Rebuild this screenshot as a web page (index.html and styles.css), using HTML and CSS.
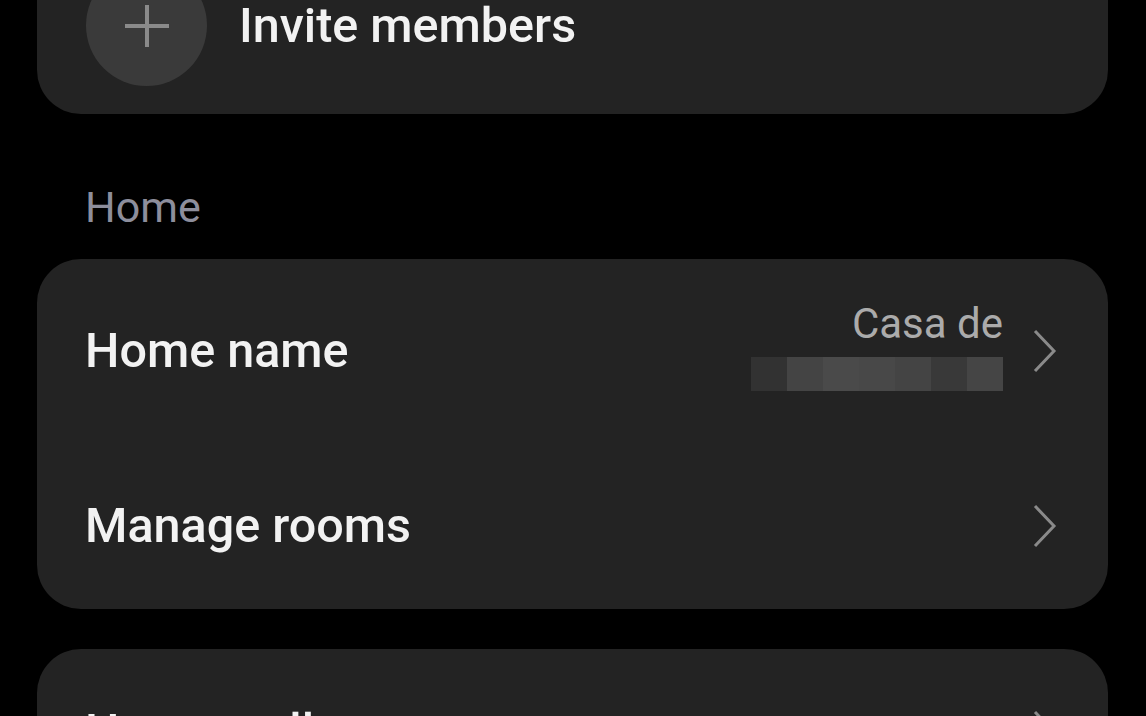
FILE: index.html
```html
<!DOCTYPE html>
<html lang="en">
<head>
    <meta charset="UTF-8">
    <meta name="viewport" content="width=device-width, initial-scale=1.0">
    <title>Home settings</title>
    <link rel="stylesheet" href="styles.css">
</head>
<body>
    <div class="container">
        <div class="card">
            <div class="invite">
                <div class="invite-icon">
                    <svg width="44" height="42" viewBox="0 0 44 42">
                        <path d="M0 21H44M22 0V42" stroke="#8a8a8a" stroke-width="4" fill="none"/>
                    </svg>
                </div>
                <span class="invite-text">Invite members</span>
            </div>
        </div>

        <div class="section-label">Home</div>

        <div class="card">
            <div class="row">
                <span class="title">Home name</span>
                <div class="value">
                    <span class="value-text">Casa de</span>
                    <div class="blurred">
                        <span></span><span></span><span></span><span></span><span></span><span></span><span></span>
                    </div>
                </div>
                <svg class="chevron" width="24" height="44" viewBox="0 0 24 44">
                    <polyline points="2,2 21,22 2,42" stroke="#8a8a8a" stroke-width="3" fill="none"/>
                </svg>
            </div>
            <div class="row">
                <span class="title">Manage rooms</span>
                <svg class="chevron" width="24" height="44" viewBox="0 0 24 44">
                    <polyline points="2,2 21,22 2,42" stroke="#8a8a8a" stroke-width="3" fill="none"/>
                </svg>
            </div>
        </div>

        <div class="card card-last">
            <div class="row">
                <span class="title">Home wallpaper</span>
                <svg class="chevron" width="24" height="44" viewBox="0 0 24 44">
                    <polyline points="2,2 21,22 2,42" stroke="#8a8a8a" stroke-width="3" fill="none"/>
                </svg>
            </div>
        </div>
    </div>
</body>
</html>
```

FILE: styles.css
```css
body {
    font-family: Roboto, "Liberation Sans", sans-serif;
    margin: 0;
    padding: 0;
    background: #000;
    color: #f2f2f2;
    overflow: hidden;
}
.container {
    margin-top: -63px;
    padding: 0 38px 0 37px;
}
.card {
    background: #232323;
    border-radius: 44px;
}
.card-last {
    margin-top: 40px;
}
.invite {
    display: flex;
    align-items: center;
    gap: 32px;
    padding: 28px 49px;
}
.invite-icon {
    width: 121px;
    height: 121px;
    border-radius: 50%;
    background: #3a3a3a;
    display: flex;
    align-items: center;
    justify-content: center;
}
.invite-text {
    font-size: 48.5px;
    font-weight: 500;
    line-height: 56px;
}
.section-label {
    font-size: 43px;
    line-height: 50px;
    color: #8d8e9c;
    margin: 68px 0 27px 48px;
}
.row {
    display: flex;
    align-items: center;
    min-height: 166px;
    box-sizing: border-box;
    padding: 47px 51px 47px 48px;
}
.title {
    flex: 1;
    font-size: 48.5px;
    font-weight: 500;
    line-height: 56px;
}
.value {
    display: flex;
    flex-direction: column;
    align-items: flex-end;
    margin: -5px 30px 5px 0;
}
.value-text {
    font-size: 42px;
    line-height: 46px;
    color: #ababab;
}
.blurred {
    display: flex;
    margin-top: 10px;
    height: 34px;
}
.blurred span {
    width: 36px;
    background: #444;
}
.blurred span:nth-child(1) { background: #323232; }
.blurred span:nth-child(2) { background: #444; }
.blurred span:nth-child(3) { background: #4a4a4a; }
.blurred span:nth-child(4) { background: #484848; }
.blurred span:nth-child(5) { background: #444; }
.blurred span:nth-child(6) { background: #393939; }
.blurred span:nth-child(7) { background: #454545; }
.chevron {
    flex-shrink: 0;
}
```
